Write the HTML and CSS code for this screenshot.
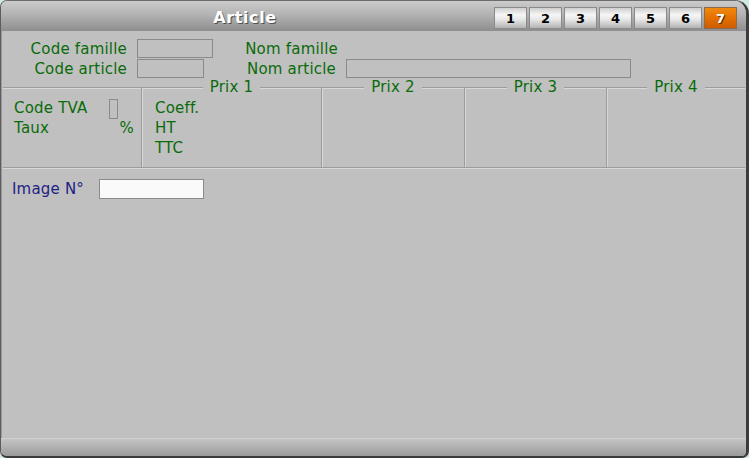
FILE: index.html
```html
<!DOCTYPE html>
<html lang="fr">
<head>
<meta charset="utf-8">
<title>Article</title>
<link rel="stylesheet" href="styles.css">
</head>
<body>
<div class="window">
  <div class="titlebar">
    <div class="title">Article</div>
    <div class="tabs">
      <span class="tab">1</span>
      <span class="tab">2</span>
      <span class="tab">3</span>
      <span class="tab">4</span>
      <span class="tab">5</span>
      <span class="tab">6</span>
      <span class="tab active">7</span>
    </div>
  </div>
  <div class="content">
    <div class="head-form">
      <span class="lbl r">Code famille</span>
      <span class="box box-fam"></span>
      <span class="lbl r">Nom famille</span>
      <span></span>
      <span class="lbl r">Code article</span>
      <span class="box box-art"></span>
      <span class="lbl r nom-art">Nom article</span>
      <span class="box box-nom"></span>
    </div>
    <div class="prices">
      <div class="col panel">
        <div class="prow tva">
          <span class="lbl">Code TVA</span>
          <span class="box box-tva"></span>
        </div>
        <div class="prow taux">
          <span class="lbl">Taux</span>
          <span class="lbl">%</span>
        </div>
      </div>
      <div class="col prix1">
        <div class="legend"><span>Prix 1</span></div>
        <div class="prow"><span class="lbl">Coeff.</span></div>
        <div class="prow"><span class="lbl">HT</span></div>
        <div class="prow"><span class="lbl">TTC</span></div>
      </div>
      <div class="col">
        <div class="legend"><span>Prix 2</span></div>
      </div>
      <div class="col">
        <div class="legend"><span>Prix 3</span></div>
      </div>
      <div class="col">
        <div class="legend"><span>Prix 4</span></div>
      </div>
    </div>
    <div class="image-row">
      <span class="lbl blue img-lbl">Image N°</span>
      <span class="box white"></span>
    </div>
  </div>
  <div class="statusbar"></div>
</div>
</body>
</html>
```

FILE: styles.css
```css
* { box-sizing: border-box; }

html, body {
  margin: 0;
  padding: 0;
  background: #d0e8e4;
}

body {
  width: 749px;
  height: 458px;
  overflow: hidden;
  font-family: "DejaVu Sans", Verdana, sans-serif;
}

.window {
  width: 749px;
  height: 458px;
  display: flex;
  flex-direction: column;
  background: #c0c0c0;
  border-style: solid;
  border-width: 1px 3px 2px 1px;
  border-color: #6c6c6c #3c3c3c #3a3a3a #5c5c5c;
  border-radius: 7px 14px 7px 7px;
  overflow: hidden;
  box-shadow: inset 1px 0 0 #9a9a9a;
}

/* title bar */
.titlebar {
  height: 30px;
  flex: none;
  display: flex;
  align-items: center;
  padding: 4px 9px 0 0;
  background: linear-gradient(#cbcbcb, #b6b6b6 40%, #8e8e8e);
}

.title {
  flex: 1;
  text-align: center;
  font-weight: bold;
  font-size: 16px;
  letter-spacing: 0.6px;
  color: #ffffff;
  text-shadow: 1px 1px 0 #505050;
  margin-top: -1px;
  padding-right: 5px;
}

.tabs {
  display: flex;
  gap: 2px;
}

.tab {
  width: 33px;
  height: 22px;
  display: flex;
  align-items: center;
  justify-content: center;
  font-weight: bold;
  font-size: 13px;
  color: #000;
  border: 1px solid #8a8a8a;
  background: linear-gradient(#cfcfcf, #f6f6f6 35%, #e4e4e4 60%, #b4b4b4);
}

.tab.active {
  color: #fff;
  text-shadow: 1px 1px 0 #5a2a00;
  border-color: #8c6a4a;
  background: linear-gradient(#f08a10, #e67200 45%, #cc5c00);
}

/* content */
.content {
  flex: 1;
}

.lbl {
  font-size: 15px;
  line-height: 20px;
  letter-spacing: 0.2px;
  color: #0a6b0a;
  white-space: nowrap;
}

.lbl.r { text-align: right; }
.lbl.blue { color: #1e1e86; }

.box {
  display: block;
  height: 19px;
  border: 1px solid #8a8a8a;
  background: #c0c0c0;
}

.box.white {
  background: #fafafa;
  height: 20px;
}

.head-form {
  display: grid;
  grid-template-columns: 126px 86px 125px 293px;
  grid-auto-rows: 20px;
  margin-top: 8px;
}

.box-fam { width: 76px; margin-left: 10px; }
.box-art { width: 67px; margin-left: 10px; }
.box-nom { width: 285px; margin-left: 8px; }
.nom-art { padding-right: 2px; }

/* price section */
.prices {
  display: grid;
  grid-template-columns: 138px 180px 143px 142px 1fr;
  height: 81px;
  margin: 8px 1px 0 2px;
  border-top: 1px solid #9c9c9c;
  border-bottom: 1px solid #9c9c9c;
  box-shadow: inset 0 1px 0 #d8d8d8, 0 1px 0 #d8d8d8;
}

.col {
  position: relative;
  padding-top: 10px;
}

.col + .col {
  border-left: 1px solid #9c9c9c;
  box-shadow: inset 1px 0 0 #d8d8d8;
}

.panel {
  padding-left: 11px;
  padding-right: 7px;
}

.prix1 {
  padding-left: 13px;
}

.prow {
  height: 20px;
  display: flex;
  align-items: center;
}

.tva {
  justify-content: space-between;
  padding-right: 16px;
}

.box-tva {
  width: 9px;
  height: 20px;
  margin-top: 2px;
}

.taux {
  justify-content: space-between;
}

.legend {
  position: absolute;
  top: -10px;
  left: 0;
  right: 0;
  text-align: center;
  font-size: 15px;
  line-height: 18px;
  letter-spacing: 0.2px;
  color: #0a6b0a;
}

.legend span {
  background: #c0c0c0;
  padding: 0 7px;
}

/* image row */
.image-row {
  display: flex;
  align-items: center;
  margin-top: 11px;
  padding-left: 11px;
  height: 20px;
}

.img-lbl {
  width: 87px;
}

.image-row .box {
  width: 105px;
}

/* status bar */
.statusbar {
  height: 18px;
  flex: none;
  border-top: 1px solid #d0d0d0;
  background: linear-gradient(#c4c4c4, #b0b0b0 50%, #9a9a9a);
}
```
